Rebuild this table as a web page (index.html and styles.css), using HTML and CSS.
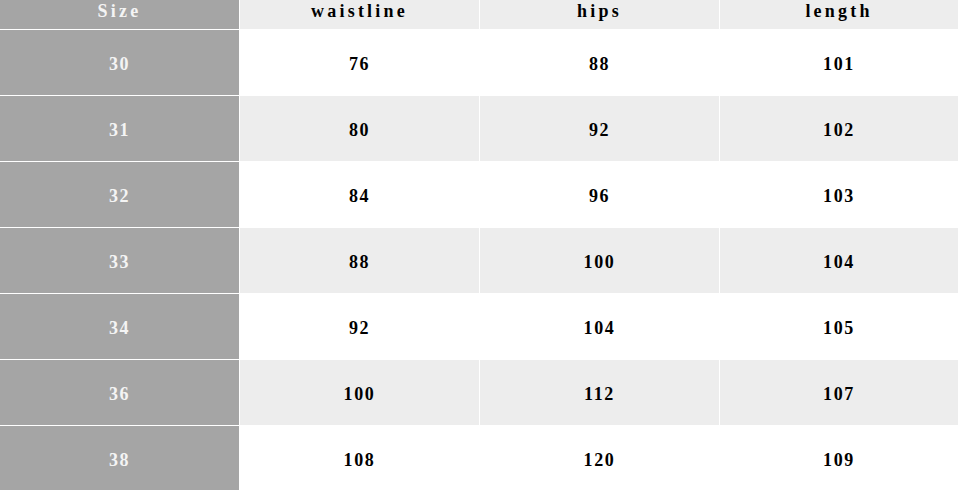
FILE: index.html
```html
<!DOCTYPE html>
<html>
<head>
<meta charset="utf-8">
<link rel="stylesheet" href="styles.css">
</head>
<body>
<div class="table">
  <div class="cell head size">Size</div>
  <div class="cell head">waistline</div>
  <div class="cell head">hips</div>
  <div class="cell head">length</div>

  <div class="cell size">30</div><div class="cell">76</div><div class="cell">88</div><div class="cell">101</div>
  <div class="cell size">31</div><div class="cell alt">80</div><div class="cell alt">92</div><div class="cell alt">102</div>
  <div class="cell size">32</div><div class="cell">84</div><div class="cell">96</div><div class="cell">103</div>
  <div class="cell size">33</div><div class="cell alt">88</div><div class="cell alt">100</div><div class="cell alt">104</div>
  <div class="cell size">34</div><div class="cell">92</div><div class="cell">104</div><div class="cell">105</div>
  <div class="cell size">36</div><div class="cell alt">100</div><div class="cell alt">112</div><div class="cell alt">107</div>
  <div class="cell size">38</div><div class="cell">108</div><div class="cell">120</div><div class="cell">109</div>
</div>
</body>
</html>
```
FILE: styles.css
```css
html, body {
  margin: 0;
  padding: 0;
  background: #ffffff;
}
.table {
  display: grid;
  grid-template-columns: 239px 239px 239px 238px;
  grid-template-rows: 29px repeat(7, 65px);
  gap: 1px;
  background: #ffffff;
  width: 958px;
  height: 490px;
  overflow: hidden;
}
.cell {
  display: flex;
  align-items: center;
  justify-content: center;
  box-sizing: border-box;
  padding-top: 3px;
  background: #ffffff;
  color: #000000;
  font-family: "Liberation Serif", "DejaVu Serif", serif;
  font-weight: bold;
  font-size: 18px;
  letter-spacing: 1.6px;
}
.cell.head {
  background: #ededed;
  padding-top: 0;
  padding-bottom: 6px;
  letter-spacing: 3.2px;
  font-size: 18px;
}
.cell.alt {
  background: #ededed;
}
.cell.size {
  background: #a5a5a5;
  color: #f4f4f4;
}
```
